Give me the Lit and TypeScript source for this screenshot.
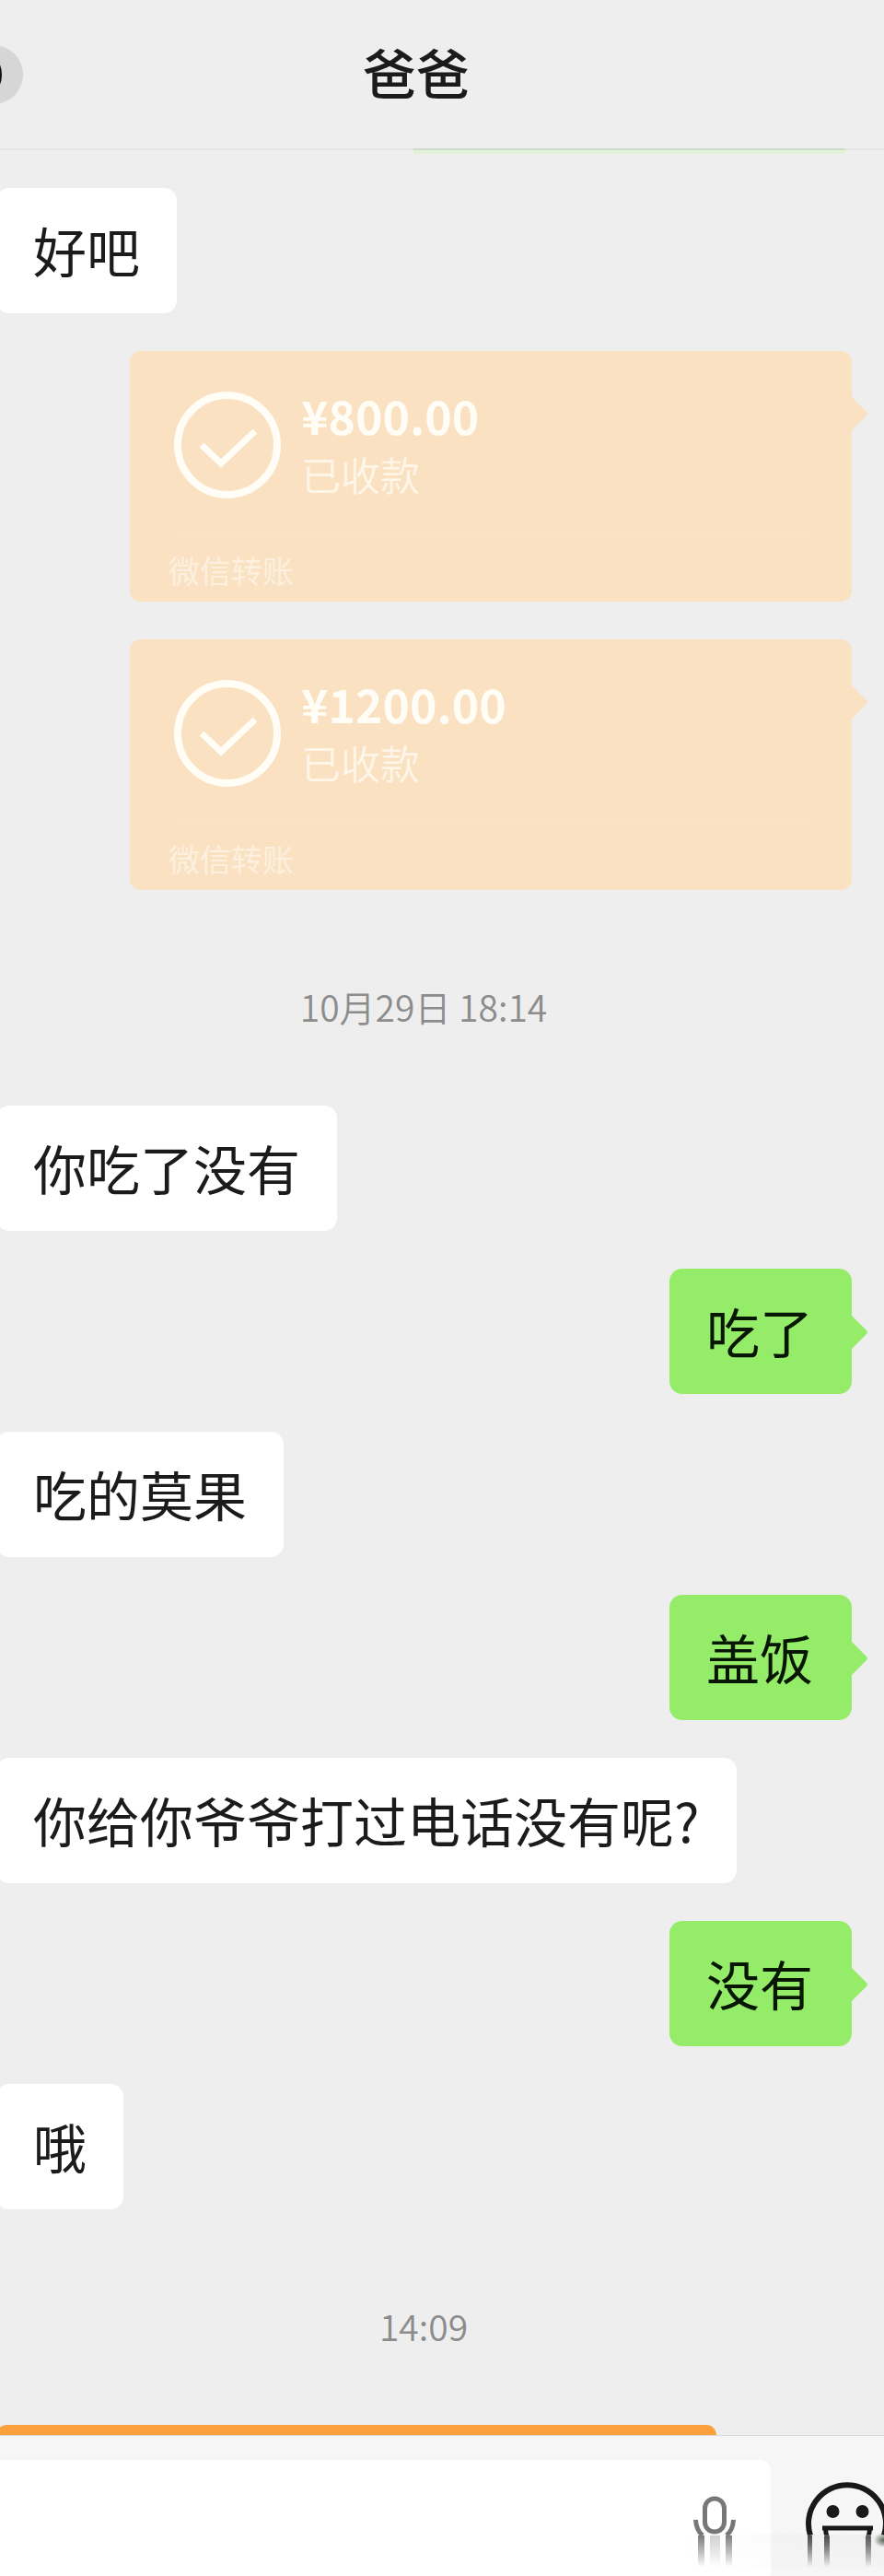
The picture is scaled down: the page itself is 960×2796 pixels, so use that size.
import { LitElement, html, css, svg } from "lit";
import { customElement, property } from "lit/decorators.js";

type Item =
  | { kind: "text"; from: "them" | "me"; text: string }
  | { kind: "transfer"; amount: string; status: string; source: string }
  | { kind: "time"; text: string };

const ITEMS: Item[] = [
  { kind: "text", from: "them", text: "好吧" },
  { kind: "transfer", amount: "¥800.00", status: "已收款", source: "微信转账" },
  { kind: "transfer", amount: "¥1200.00", status: "已收款", source: "微信转账" },
  { kind: "time", text: "10月29日 18:14" },
  { kind: "text", from: "them", text: "你吃了没有" },
  { kind: "text", from: "me", text: "吃了" },
  { kind: "text", from: "them", text: "吃的莫果" },
  { kind: "text", from: "me", text: "盖饭" },
  { kind: "text", from: "them", text: "你给你爷爷打过电话没有呢?" },
  { kind: "text", from: "me", text: "没有" },
  { kind: "text", from: "them", text: "哦" },
  { kind: "time", text: "14:09" },
];

const tail = svg`<path d="M0 0 L16 16 Q18 18 16 20 L0 36 Z" fill="currentColor" />`;

@customElement("chat-bubble")
export class ChatBubble extends LitElement {
  @property() from = "them";

  static styles = css`
    :host {
      display: flex;
      padding-right: 35px;
    }
    .bubble {
      position: relative;
      box-sizing: border-box;
      min-height: 136px;
      padding: 37px 40px 39px;
      border-radius: 14px;
      font-size: 58px;
      line-height: 60px;
    }
    .them {
      margin-left: -4px;
      background: #fff;
      color: #1b1b1b;
    }
    .me {
      margin-left: auto;
      padding-right: 42px;
      color: #071704;
      background: #95ec69;
    }
    .tail {
      position: absolute;
      left: 100%;
      top: 51px;
      width: 18px;
      height: 36px;
      color: #95ec69;
    }
  `;

  render() {
    return html`<div class="bubble ${this.from}">
      <slot></slot>
      ${this.from === "me"
        ? html`<svg class="tail" viewBox="0 0 18 36" aria-hidden="true">${tail}</svg>`
        : null}
    </div>`;
  }
}

@customElement("transfer-card")
export class TransferCard extends LitElement {
  @property() amount = "";
  @property() status = "";
  @property() source = "";

  static styles = css`
    :host {
      display: block;
      padding: 0 35px 0 141px;
    }
    .card {
      position: relative;
      box-sizing: border-box;
      min-height: 272px;
      padding: 41px 44px 10px;
      border-radius: 12px;
      background: #fae1c2;
      color: #fffdf5;
    }
    .top {
      display: flex;
      align-items: flex-start;
      gap: 22px;
      padding-left: 4px;
      height: 158px;
      border-bottom: 1px solid #fbe4c8;
    }
    .check {
      width: 116px;
      height: 116px;
      margin-top: 3px;
      flex: none;
    }
    .amount {
      font-size: 50px;
      line-height: 56px;
      font-weight: 700;
    }
    .status {
      font-size: 43px;
      line-height: 64px;
      margin-top: 4px;
      color: #fff6e8;
      font-weight: 350;
    }
    .source {
      font-size: 34px;
      line-height: 40px;
      padding-top: 18px;
      margin-left: -2px;
      color: #fdf0df;
    }
    .tail {
      position: absolute;
      left: 100%;
      top: 50px;
      width: 18px;
      height: 36px;
      color: #fae1c2;
    }
  `;

  render() {
    return html`<div class="card">
      <div class="top">
        <svg class="check" viewBox="0 0 116 116" fill="none" stroke="currentColor" aria-hidden="true">
          <circle cx="58" cy="58" r="54" stroke-width="8" />
          <path d="M30 58 L51 78 L88 43" stroke-width="7" />
        </svg>
        <div>
          <div class="amount">${this.amount}</div>
          <div class="status">${this.status}</div>
        </div>
      </div>
      <div class="source">${this.source}</div>
      <svg class="tail" viewBox="0 0 18 36" aria-hidden="true">${tail}</svg>
    </div>`;
  }
}

@customElement("app-root")
export class AppRoot extends LitElement {
  static styles = css`
    :host {
      display: flex;
      flex-direction: column;
      min-height: 100vh;
      overflow: hidden;
      background: #eeeeee;
      color: #1b1b1b;
      font-family: "Noto Sans CJK SC", sans-serif;
    }
    header {
      display: grid;
      grid-template-columns: 1fr auto 1fr;
      align-items: center;
      box-sizing: border-box;
      height: 163px;
      padding-right: 56px;
      border-bottom: 2px solid #e4e4e4;
    }
    h1 {
      margin: 0;
      padding-bottom: 8px;
      font-size: 58px;
      line-height: 64px;
      font-weight: 500;
    }
    button {
      display: block;
      padding: 0;
      border: 0;
      background: none;
      color: inherit;
    }
    svg {
      display: block;
    }
    .unread {
      width: 25px;
      height: 64px;
    }
    main {
      flex: 1;
      display: flex;
      flex-direction: column;
      gap: 41px;
    }
    .previous {
      height: 6px;
      margin: -2px 42px -4px 449px;
      background: linear-gradient(#cddac9 2px, #e2f2d8 2px);
    }
    time {
      display: block;
      padding: 57px 40px 39px 0;
      text-align: center;
      font-size: 39px;
      line-height: 56px;
      font-weight: 350;
      color: #8c8c8c;
    }
    .next {
      height: 11px;
      margin: 0 182px 0 -4px;
      border-radius: 16px 16px 0 0;
      background: #faa03c;
    }
    footer {
      position: relative;
      display: flex;
      align-items: stretch;
      padding-top: 26px;
      border-top: 1px solid #d9d9d9;
      background: #f6f6f6;
    }
    .field {
      flex: 1;
      display: flex;
      align-items: flex-start;
      height: 126px;
      padding-right: 37px;
      border-radius: 0 12px 0 0;
      background: #fff;
    }
    input {
      flex: 1;
      min-width: 0;
      height: 126px;
      padding: 0 36px;
      box-sizing: border-box;
      border: 0;
      outline: 0;
      background: none;
      font: inherit;
      font-size: 58px;
    }
    .mic {
      margin-top: 36px;
    }
    .mic svg {
      width: 50px;
      height: 82px;
    }
    .emoji {
      margin: 20px 0 0 35px;
      align-self: flex-start;
    }
    .emoji svg {
      width: 88px;
      height: 98px;
    }
    .haze {
      position: absolute;
      right: 0;
      bottom: 9px;
      width: 220px;
      height: 36px;
      pointer-events: none;
      background: linear-gradient(90deg, #ededed00, #e4e4e466);
      mask-image: linear-gradient(#000, #000a 30%, #0005);
    }
  `;

  private renderItem(item: Item) {
    switch (item.kind) {
      case "text":
        return html`<chat-bubble from=${item.from}>${item.text}</chat-bubble>`;
      case "transfer":
        return html`<transfer-card
          amount=${item.amount}
          status=${item.status}
          source=${item.source}
        ></transfer-card>`;
      case "time":
        return html`<time>${item.text}</time>`;
    }
  }

  render() {
    return html`
      <header>
        <button aria-label="返回">
          <svg class="unread" viewBox="0 0 25 64" aria-hidden="true">
            <circle cx="-7" cy="32" r="32" fill="#d6d6d6" />
            <ellipse cx="-8" cy="32" rx="10" ry="18" fill="#111" />
          </svg>
        </button>
        <h1>爸爸</h1>
      </header>
      <main>
        <div class="previous"></div>
        ${ITEMS.map((item) => this.renderItem(item))}
        <div class="next"></div>
      </main>
      <footer>
        <div class="field">
          <input type="text" aria-label="输入消息" />
          <button class="mic" aria-label="语音输入">
            <svg viewBox="0 0 50 82" fill="none" stroke="#777" stroke-width="5" aria-hidden="true">
              <defs>
                <linearGradient id="mf" x1="0" y1="0" x2="0" y2="1">
                  <stop offset="0" stop-color="#777" />
                  <stop offset="1" stop-color="#777" stop-opacity="0" />
                </linearGradient>
              </defs>
              <rect x="15.5" y="6" width="21" height="36" rx="10.5" />
              <path d="M5.500 29 Q6 40 13 46 M46.500 29 Q46 40 39 46" />
              <g stroke="none" fill="url(#mf)">
                <rect x="8" y="46" width="7" height="34" />
                <rect x="21" y="46" width="11" height="34" opacity="0.35" />
                <rect x="38" y="46" width="7" height="34" />
              </g>
            </svg>
          </button>
        </div>
        <button class="emoji" aria-label="表情">
          <svg viewBox="0 0 88 98" fill="none" stroke="#191919" aria-hidden="true">
            <defs>
              <linearGradient id="ef" x1="0" y1="0" x2="0" y2="1">
                <stop offset="0" stop-color="#191919" />
                <stop offset="1" stop-color="#191919" stop-opacity="0" />
              </linearGradient>
              <radialGradient id="spot">
                <stop offset="0" stop-color="#0c260c" />
                <stop offset="1" stop-color="#0c260c" stop-opacity="0" />
              </radialGradient>
            </defs>
            <path d="M8 62 A42 42 0 1 1 88 62" stroke-width="6" />
            <g fill="#191919" stroke="none">
              <circle cx="32.500" cy="36" r="7" />
              <circle cx="64.500" cy="36" r="7" />
            </g>
            <path d="M21 54 H76 M24.500 54 Q24.500 60 26.500 64 M72.500 54 Q72.500 60 70.500 64" stroke-width="5" />
            <g stroke="none" fill="url(#ef)">
              <rect x="5" y="62" width="5" height="34" />
              <rect x="23" y="63" width="6" height="33" />
              <rect x="68" y="63" width="6" height="33" />
            </g>
            <ellipse cx="88" cy="67" rx="11" ry="8" fill="url(#spot)" stroke="none" />
          </svg>
        </button>
        <div class="haze"></div>
      </footer>
    `;
  }
}
